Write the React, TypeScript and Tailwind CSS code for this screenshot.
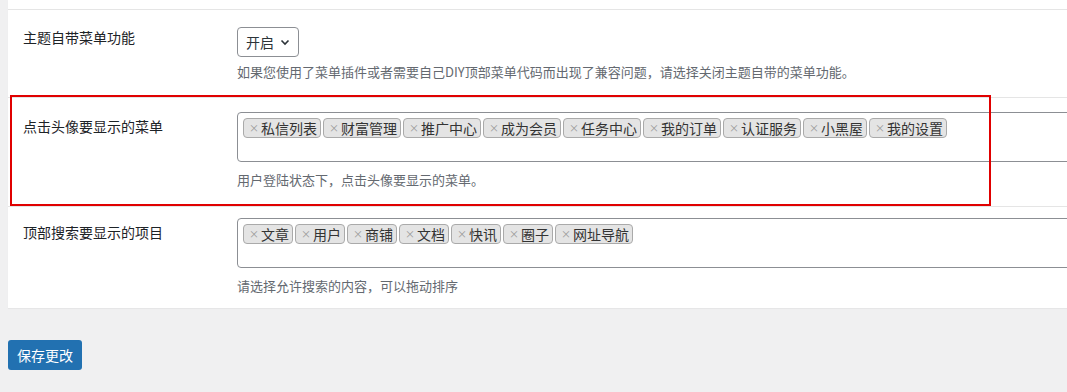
import * as React from 'react';

const font = { fontFamily: '"Noto Sans CJK SC", "Noto Sans", sans-serif' };

const avatarMenu = ['私信列表', '财富管理', '推广中心', '成为会员', '任务中心', '我的订单', '认证服务', '小黑屋', '我的设置'];
const searchItems = ['文章', '用户', '商铺', '文档', '快讯', '圈子', '网址导航'];

const Tag = ({ label }: { label: string }) => (
  <span className="flex h-[20px] items-center rounded-[4px] border border-[#aaa] bg-[#e4e4e4] pl-[5px] pr-[3px] text-[14px] leading-none text-[#333]">
    <span className="mr-[2px] text-[10px] text-[#999]">×</span>
    {label}
  </span>
);

const TagBox = ({ items }: { items: string[] }) => (
  <div className="flex h-[50px] w-[900px] flex-wrap content-start gap-[2px] rounded-[4px] border border-[#8c8f94] bg-white px-[5px] pt-[5px]">
    {items.map((i) => (
      <Tag key={i} label={i} />
    ))}
  </div>
);

const Row = ({
  label,
  children,
  desc,
  pt,
  lpt,
  h,
}: {
  label: string;
  children: React.ReactNode;
  desc: string;
  pt: string;
  lpt: string;
  h: string;
}) => (
  <div className={`flex border-t border-[#e5e5e5] ${h}`}>
    <div className={`w-[229px] shrink-0 pl-[15px] text-[14px] leading-[20px] text-[#1d2327] ${lpt}`}>{label}</div>
    <div className={`flex flex-col ${pt}`}>
      {children}
      <p className="mt-[9px] text-[13px] leading-[18px] text-[#646970]">{desc}</p>
    </div>
  </div>
);

export default function App() {
  return (
    <div className="relative h-[392px] w-[1067px] overflow-hidden bg-[#f0f0f1]" style={font}>
      <div className="ml-[8px] w-[1200px] bg-white pt-[9px] shadow-[0_1px_1px_rgba(0,0,0,0.04)]">
        <div className="flex h-[88px] border-t border-[#e5e5e5]">
          <div className="w-[229px] shrink-0 pl-[15px] pt-[17px] text-[14px] leading-[20px] text-[#1d2327]">主题自带菜单功能</div>
          <div className="flex flex-col pt-[17px]">
            <div className="flex h-[30px] w-[62px] items-center gap-[6px] rounded-[4px] border border-[#8c8f94] pl-[8px] text-[14px] text-[#2c3338]">
              开启
              <svg width="10" height="10" viewBox="0 0 10 10" fill="none" stroke="#2c3338" strokeWidth="1.6">
                <path d="M1.5 3.5 L5 7 L8.5 3.5" />
              </svg>
            </div>
            <p className="mt-[6px] text-[13px] leading-[18px] text-[#646970]">
              如果您使用了菜单插件或者需要自己DIY顶部菜单代码而出现了兼容问题，请选择关闭主题自带的菜单功能。
            </p>
          </div>
        </div>
        <Row label="点击头像要显示的菜单" desc="用户登陆状态下，点击头像要显示的菜单。" pt="pt-[14px]" lpt="pt-[18px]" h="h-[109px]">
          <TagBox items={avatarMenu} />
        </Row>
        <Row label="顶部搜索要显示的项目" desc="请选择允许搜索的内容，可以拖动排序" pt="pt-[11px]" lpt="pt-[15px]" h="h-[102px]">
          <TagBox items={searchItems} />
        </Row>
      </div>
      <div className="pl-[8px] pt-[32px]">
        <button className="h-[30px] rounded-[3px] bg-[#2271b1] px-[9px] text-[14px] text-white">保存更改</button>
      </div>
      <div className="pointer-events-none absolute left-[10px] top-[95px] h-[111px] w-[981px] border-2 border-[#e00000]" />
    </div>
  );
}
